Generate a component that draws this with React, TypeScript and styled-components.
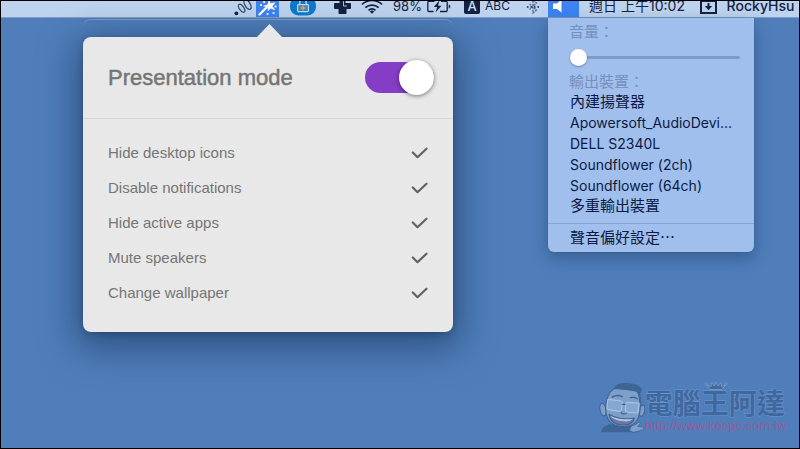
import React, { useState } from "react";
import styled, { createGlobalStyle, css } from "styled-components";

const latin = `Inter, "Noto Sans CJK TC", sans-serif`;
const ink = "#14203f";

const GlobalStyle = createGlobalStyle`
  *, *::before, *::after { box-sizing: border-box; }
  body { margin: 0; }
  button, input { font: inherit; color: inherit; margin: 0; }
  svg { display: block; flex: none; }
`;

const Desktop = styled.main`
  position: relative;
  display: flex;
  flex-direction: column;
  min-height: 100vh;
  overflow: hidden;
  border: 1px solid #000;
  background: #4f7eba;
  font-family: ${latin};
`;

const MenuBar = styled.header`
  display: flex;
  justify-content: flex-end;
  align-items: flex-end;
  height: 17px;
  background: #bdd3ee;
  border-bottom: 1px solid #7f9cc4;
  color: ${ink};
`;

const Slot = styled.div<{ $width: number; $active?: boolean }>`
  position: relative;
  flex: none;
  display: flex;
  justify-content: center;
  align-items: flex-end;
  gap: 5px;
  width: ${(p) => p.$width}px;
  height: 16px;
  ${(p) => p.$active && css`background: #3d83f2;`}
`;

const BarButton = styled.button`
  display: flex;
  padding: 0;
  border: 0;
  background: none;
`;

const BarText = styled.span<{ $size?: number; $weight?: number }>`
  flex: none;
  padding-bottom: 2px;
  font-size: ${(p) => p.$size ?? 14}px;
  font-weight: ${(p) => p.$weight ?? 400};
  line-height: 18px;
  white-space: nowrap;
`;

const Popover = styled.section`
  position: absolute;
  top: 36px;
  right: -174px;
  width: 370px;
  border-radius: 8px;
  background: #e8e8e8;
  color: #757575;
  font-family: "Liberation Sans", Arial, sans-serif;
  box-shadow: 0 10px 36px 6px rgba(20, 44, 82, 0.55), 0 2px 6px rgba(20, 44, 82, 0.35);

  &::before {
    content: "";
    position: absolute;
    top: -13px;
    left: 173px;
    width: 27px;
    height: 14px;
    background: inherit;
    clip-path: polygon(50% 0, 100% 100%, 0 100%);
  }
`;

const WindowEdge = styled.div`
  position: absolute;
  top: 18px;
  right: -174px;
  width: 370px;
  height: 8px;
  border-top: 1px solid #8098bc;
  border-radius: 8px 8px 0 0;
`;

const PopoverHeader = styled.label`
  display: flex;
  justify-content: space-between;
  align-items: center;
  height: 82px;
  padding: 0 19px 0 25px;
  border-bottom: 1px solid #d6d6d6;
  font-size: 22px;
  -webkit-text-stroke: 0.5px currentColor;
`;

const Switch = styled.input`
  appearance: none;
  display: flex;
  align-items: center;
  width: 69px;
  height: 31px;
  border-radius: 16px;
  background: #843dc4;

  &:not(:checked) { background: #b5b5b5; }

  &::before {
    content: "";
    width: 35px;
    height: 35px;
    flex: none;
    border-radius: 50%;
    background: #fff;
    box-shadow: 0 1px 4px rgba(0, 0, 0, 0.5);
  }

  &:checked::before { margin-left: auto; }
`;

const OptionList = styled.ul`
  margin: 0;
  padding: 16px 25px 22px;
  list-style: none;
`;

const Option = styled.label`
  display: flex;
  justify-content: space-between;
  align-items: center;
  height: 35px;
  font-size: 15px;
`;

const HiddenCheck = styled.input`
  position: absolute;
  opacity: 0;
  &:not(:checked) + svg { visibility: hidden; }
`;

const SoundMenu = styled.section`
  position: absolute;
  top: 17px;
  left: 0;
  display: flex;
  flex-direction: column;
  width: 206px;
  padding: 4px 0;
  border-radius: 0 0 6px 6px;
  background: #a0bfec;
  color: #0c1a44;
  box-shadow: 0 6px 16px rgba(20, 44, 82, 0.4), 0 0 1px rgba(20, 44, 82, 0.5);
`;

const MenuLabel = styled.label`
  padding-left: 21px;
  font-size: 15px;
  line-height: 20px;
  color: #7590bd;
`;

const MenuItem = styled.button<{ $cjk?: boolean }>`
  padding: 0 22px;
  border: 0;
  background: none;
  text-align: left;
  white-space: nowrap;
  font-size: ${(p) => (p.$cjk ? 15 : 14)}px;
  line-height: ${(p) => (p.$cjk ? 20 : 21)}px;
`;

const Separator = styled.hr`
  width: 100%;
  margin: 7px 0 4px;
  border: 0;
  border-top: 1px solid #87a4d2;
`;

const Volume = styled.input`
  appearance: none;
  height: 30px;
  margin: 0 14px 0 22px;
  background: none;

  &::-webkit-slider-runnable-track {
    height: 3px;
    border-radius: 2px;
    background: #7f9ac5;
  }
  &::-webkit-slider-thumb {
    appearance: none;
    width: 17px;
    height: 17px;
    margin-top: -7px;
    border-radius: 50%;
    background: #fff;
    box-shadow: 0 1px 2px rgba(20, 40, 80, 0.4);
  }
`;

const Signature = styled.footer`
  display: flex;
  align-self: flex-end;
  align-items: flex-end;
  margin-top: auto;
  padding: 0 12px 15px 0;
`;

const SiteTitle = styled.div`
  position: relative;
  display: flex;
  flex-direction: column;
`;

const SiteName = styled.strong`
  font-family: "Noto Sans CJK TC", sans-serif;
  font-size: 28px;
  font-weight: 700;
  line-height: 31px;
  color: #3f68a1;
  -webkit-text-stroke: 1px #6f98cb;
  paint-order: stroke fill;
`;

const SiteLink = styled.a`
  font-family: "Liberation Sans", Arial, sans-serif;
  font-size: 13px;
  line-height: 15px;
  color: #985c98;
  text-decoration: none;
`;

const CrownSlot = styled.span`
  position: absolute;
  top: -6px;
  left: 59px;
`;

const SignalIcon = () => (
  <svg width="20" height="16" viewBox="0 0 20 16" fill="none" stroke="#38496b" strokeWidth="1.3" overflow="visible">
    <circle cx="3.4" cy="12.3" r="1.9" fill={ink} stroke="none" />
    <ellipse cx="8.6" cy="7.2" rx="2.2" ry="4.6" transform="rotate(-35 8.6 7.2)" />
    <ellipse cx="14.5" cy="3.4" rx="2.6" ry="5.4" transform="rotate(-30 14.5 3.4)" />
  </svg>
);

const WandIcon = () => (
  <svg width="23" height="16" viewBox="0 0 23 16" fill="none" stroke="#fff" strokeLinecap="round">
    <path d="M3.500 13.500 10.500 6.500" strokeWidth="2.400" />
    <path d="m13-1 1.300 3.500L19 1.800l-2.800 3.400 2.600 3.600-4.300-1.500-2.300 2.500-.2-3.800L7.500 5l4.200-1.200z" fill="#fff" strokeWidth=".5" />
    <path d="M5 4h.1M8 1h.1M17.500 12h.1M11.500 13h.1M19.500 5.500h.1" strokeWidth="2" />
  </svg>
);

const LockPillIcon = () => (
  <svg width="26" height="16" viewBox="0 0 26 16" fill="none" overflow="visible">
    <rect y="-4" width="26" height="18.500" rx="8.500" fill="#0d78c8" />
    <path d="M9.800 3.500V1.800a3.200 3.200 0 0 1 6.400 0v1.700" stroke="#b9d8f3" strokeWidth="1.300" />
    <rect x="7.600" y="3.600" width="10.800" height="7" rx=".8" fill="#3c83bd" stroke="#b9d8f3" strokeWidth="1.200" />
    <path d="M13 4.500v5M10.500 7h5" stroke="#e9a253" strokeWidth="1.300" />
  </svg>
);

const CrossIcon = () => (
  <svg width="17" height="16" viewBox="0 0 17 16" overflow="visible">
    <path d="M5.500-2h6v4H16a1 1 0 0 1 1 1v4a1 1 0 0 1-1 1h-3.500v4a1 1 0 0 1-1 1h-6a1 1 0 0 1-1-1V8H1a1 1 0 0 1-1-1V3a1 1 0 0 1 1-1h4.500z" fill={ink} />
    <path d="M9.500 0v5h3.500" fill="none" stroke="#a9bfdc" />
  </svg>
);

const WifiIcon = () => (
  <svg width="22" height="16" viewBox="0 0 22 16" fill="none" stroke={ink} strokeWidth="1.700" overflow="visible">
    <path d="M1 3.500a14.500 14.500 0 0 1 20 0M4.300 6.700a10 10 0 0 1 13.400 0M7.500 9.300a5.500 5.500 0 0 1 7 0" />
    <path d="m11 12.800-2.200-2.200a3.200 3.200 0 0 1 4.400 0z" fill={ink} stroke="none" />
  </svg>
);

const BatteryIcon = () => (
  <svg width="24" height="16" viewBox="0 0 24 16" fill="none" stroke={ink} strokeWidth="1.300" overflow="visible">
    <path d="M7.500.3H2a1.200 1.200 0 0 0-1.200 1.200v7.800A1.200 1.200 0 0 0 2 10.500h4.500M14 .3h5a1.200 1.200 0 0 1 1.200 1.200v7.800a1.200 1.200 0 0 1-1.200 1.200h-6" />
    <path d="M22 3.800c1.300.5 1.300 3 0 3.500z" fill={ink} strokeWidth=".6" />
    <path d="M12.500-.8 6.800 6h3.400l-1.700 5.500L14.500 4.800H11z" fill={ink} stroke="none" />
  </svg>
);

const LetterTile = styled.span`
  display: flex;
  align-items: flex-end;
  justify-content: center;
  width: 16px;
  height: 16px;
  margin-bottom: 3px;
  border-radius: 2px;
  background: ${ink};
  color: #cfe0f5;
  font-size: 13px;
  font-weight: 500;
  line-height: 16px;
`;

const BluetoothIcon = () => (
  <svg width="14" height="16" viewBox="0 0 14 16" fill="none" stroke="#56698f" strokeWidth="1.300" overflow="visible">
    <path d="m3.500 3 7 6L7 12V-1l3.500 3-7 6.500" strokeDasharray="2 1" />
    <path d="M1 6h1.500M4.500 6H6M8 6h1.500M11.500 6H13" strokeWidth="1.800" stroke="#3b4c70" />
  </svg>
);

const SpeakerIcon = () => (
  <svg width="31" height="16" viewBox="0 0 31 16" overflow="visible">
    <path d="M5 2.500h4L13.500-1.500v13L9 8H5z" fill="#fff" />
  </svg>
);

const DownBoxIcon = () => (
  <svg width="17" height="16" viewBox="0 0 17 16" fill="none" stroke={ink} strokeWidth="2" overflow="visible">
    <path d="M1 0h15v12H1z" />
    <path d="M8.500 2v4" />
    <path d="M4.800 5h7.400L8.500 9.300z" fill={ink} stroke="none" />
  </svg>
);

const CheckIcon = () => (
  <svg width="17" height="12" viewBox="0 0 17 12" fill="none" stroke="#626262" strokeWidth="2.200" strokeLinecap="round" strokeLinejoin="round">
    <path d="m1.800 5.500 4.700 4.700 9-8.500" />
  </svg>
);

const CrownIcon = () => (
  <svg width="24" height="10" viewBox="0 0 24 10" fill="#46699d" stroke="#7b9fcd" strokeWidth=".8">
    <path d="M6 8.500 3 4l4 1.500L7.500 1.500l3 3.500L12 .8 14 5l3-3.500.5 4L21.500 4 18 8.500z" />
    <circle cx="2" cy="3" r="1.200" />
    <circle cx="22" cy="3" r="1.200" />
  </svg>
);

const FaceIcon = () => (
  <svg width="46" height="51" viewBox="0 0 138 153" fill="none" stroke="#3f6596" strokeWidth="3.5" strokeLinejoin="round" strokeLinecap="round">
    <path d="M6 151c2-14 10-20 28-24l60 4 20 20z" fill="#3f6596" stroke="none" />
    <ellipse cx="12" cy="83" rx="9" ry="19" fill="#7d9fc9" transform="rotate(-12 12 83)" />
    <ellipse cx="129" cy="86" rx="8" ry="17" fill="#7d9fc9" transform="rotate(12 129 86)" />
    <path d="M47 18C28 30 21 52 20 78c0 36 18 56 54 56 32 0 47-22 49-50 2-24 0-44-8-58z" fill="#7d9fc9" />
    <path d="M45 22c2-12 12-18 30-19 24-1 50 5 53 19 1 5-3 8-5 14-10-10-50-14-78-14z" fill="#3f6596" stroke="none" />
    <path d="M122 32c4 10 5 22 4 34l-6-8c0-12-2-20-6-28z" fill="#3f6596" stroke="none" />
    <path d="M40 45c10-6 20-6 30-1M94 47c8-3 14-2 20 3" strokeWidth="4.500" />
    <path d="m29 52 38 5c3 1 4 3 3 7l-3 20c-1 4-3 5-7 4l-31-5c-4-1-5-3-5-7l2-19c0-4 1-5 3-5zM83 61l33 2c4 0 5 2 4 6l-3 19c-1 4-3 5-7 5l-26-3c-4 0-5-2-5-6l1-18c0-4 1-5 3-5z" fill="#84a7d3" stroke="#a9c4e2" strokeWidth="3.500" />
    <path d="M70 67h9M66 90c2 6 10 8 16 4" />
    <path d="M30 97c20 12 50 16 76 11-4 16-16 21-34 21-22 0-38-10-42-32z" fill="#71749f" />
    <path d="M34 101c20 10 46 13 67 10-8 7-18 8-28 7-16-2-32-7-39-17z" fill="#b2c9e4" stroke="none" />
    <path d="M92 146c0-10 6-16 14-17l13-8c5-2 7 2 3 6l-6 6 15 2c5 1 5 7 0 8l-14 5-12 3z" fill="#7d9fc9" strokeWidth="2.500" />
  </svg>
);

const OPTIONS = ["Hide desktop icons", "Disable notifications", "Hide active apps", "Mute speakers", "Change wallpaper"];

const DEVICES = [
  { name: "內建揚聲器", cjk: true },
  { name: "Apowersoft_AudioDevi..." },
  { name: "DELL S2340L" },
  { name: "Soundflower (2ch)" },
  { name: "Soundflower (64ch)" },
  { name: "多重輸出裝置", cjk: true },
];

function PresentationPopover() {
  const [on, setOn] = useState(true);
  return (
    <Popover>
      <PopoverHeader>
        Presentation mode
        <Switch type="checkbox" role="switch" checked={on} onChange={(e) => setOn(e.target.checked)} />
      </PopoverHeader>
      <OptionList>
        {OPTIONS.map((name) => (
          <li key={name}>
            <Option>
              {name}
              <HiddenCheck type="checkbox" defaultChecked />
              <CheckIcon />
            </Option>
          </li>
        ))}
      </OptionList>
    </Popover>
  );
}

function SoundPanel() {
  return (
    <SoundMenu>
      <MenuLabel htmlFor="volume">音量：</MenuLabel>
      <Volume id="volume" type="range" min={0} max={100} defaultValue={0} />
      <MenuLabel as="span">輸出裝置：</MenuLabel>
      {DEVICES.map((d) => (
        <MenuItem key={d.name} $cjk={d.cjk}>{d.name}</MenuItem>
      ))}
      <Separator />
      <MenuItem $cjk>聲音偏好設定⋯</MenuItem>
    </SoundMenu>
  );
}

export default function App() {
  return (
    <Desktop>
      <GlobalStyle />
      <MenuBar>
        <Slot $width={26}><SignalIcon /></Slot>
        <Slot $width={23} $active>
          <BarButton aria-label="Presentation mode"><WandIcon /></BarButton>
          <WindowEdge />
          <PresentationPopover />
        </Slot>
        <Slot $width={48}><LockPillIcon /></Slot>
        <Slot $width={30}><CrossIcon /></Slot>
        <Slot $width={30}><WifiIcon /></Slot>
        <Slot $width={70}><BarText $size={13}>98%</BarText><BatteryIcon /></Slot>
        <Slot $width={60}><LetterTile>A</LetterTile><BarText $size={12}>ABC</BarText></Slot>
        <Slot $width={31}><BluetoothIcon /></Slot>
        <Slot $width={31} $active>
          <BarButton aria-label="Volume"><SpeakerIcon /></BarButton>
          <SoundPanel />
        </Slot>
        <Slot $width={116}><BarText>週日 上午10:02</BarText></Slot>
        <Slot $width={27}><DownBoxIcon /></Slot>
        <Slot $width={77}><BarText $weight={500}>RockyHsu</BarText></Slot>
      </MenuBar>
      <Signature>
        <FaceIcon />
        <SiteTitle>
          <CrownSlot><CrownIcon /></CrownSlot>
          <SiteName>電腦王阿達</SiteName>
          <SiteLink href="http://www.kocpc.com.tw">http://www.kocpc.com.tw</SiteLink>
        </SiteTitle>
      </Signature>
    </Desktop>
  );
}
